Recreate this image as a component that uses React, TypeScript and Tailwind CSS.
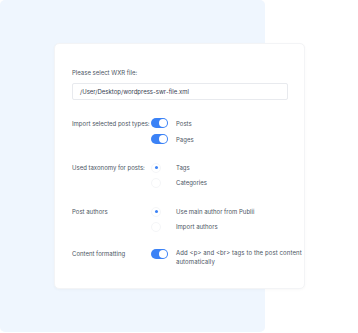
import type { ReactNode } from 'react';

// Small blue switch used for post types and formatting
function Toggle() {
  return (
    <div className="w-[17px] h-[10px] rounded-full bg-[#3b82f6] flex items-center justify-end pr-[1px] shrink-0">
      <div className="w-[8px] h-[8px] rounded-full bg-white" />
    </div>
  );
}

function Radio({ checked }: { checked?: boolean }) {
  return (
    <div className="w-[10px] h-[10px] rounded-full border border-[#f5f6f8] flex items-center justify-center shrink-0">
      {checked && <div className="w-[3px] h-[3px] rounded-full bg-[#3b82f6]" />}
    </div>
  );
}

function Row({ label, control, children, h }: { label?: string; control: ReactNode; children: ReactNode; h: string }) {
  return (
    <div className={`flex items-center ${h}`}>
      <div className="w-[79px] shrink-0">{label}</div>
      <div className="w-[25px] shrink-0 flex">{control}</div>
      <div className="whitespace-nowrap">{children}</div>
    </div>
  );
}

export default function App() {
  return (
    <div className="relative w-[358px] h-[333px] bg-white overflow-hidden" style={{ fontFamily: 'Inter, "Liberation Sans", sans-serif' }}>
      <div className="w-[265px] h-[332px] bg-[#eff6fe] rounded-[5px]" />

      <div className="absolute left-[54px] top-[43px] w-[251px] h-[246px] bg-white rounded-[5px] border border-[#f3f4f6] shadow-[0_1px_3px_rgba(0,0,0,0.03)] overflow-hidden pl-[17px] text-[6px] leading-[9px] text-[#4b5563]">
        <div className="mt-[25px] h-[8px] leading-[8px]">Please select WXR file:</div>
        <div className="mt-[6px] w-[216px] h-[17px] border border-[#e8eaee] rounded-[2px] flex items-center pl-[7px] text-[#374151]">
          /User/Desktop/wordpress-swr-file.xml
        </div>

        {/* Post types */}
        <div className="mt-[15px]">
          <Row h="h-[16px]" label="Import selected post types:" control={<Toggle />}>Posts</Row>
          <Row h="h-[16px]" control={<Toggle />}>Pages</Row>
        </div>

        {/* Taxonomy */}
        <div className="mt-[13px]">
          <Row h="h-[15px]" label="Used taxonomy for posts:" control={<Radio checked />}>Tags</Row>
          <Row h="h-[15px]" control={<Radio />}>Categories</Row>
        </div>

        {/* Authors */}
        <div className="mt-[14px]">
          <Row h="h-[15px]" label="Post authors" control={<Radio checked />}>Use main author from Publii</Row>
          <Row h="h-[15px]" control={<Radio />}>Import authors</Row>
        </div>

        {/* Formatting */}
        <div className="mt-[14px] flex items-start">
          <div className="w-[79px] shrink-0 mt-[0.5px]">Content formatting</div>
          <div className="w-[25px] shrink-0 mt-[0.5px]">
            <Toggle />
          </div>
          <div className="whitespace-nowrap tracking-[0.1px]">
            Add &lt;p&gt; and &lt;br&gt; tags to the post content
            <br />
            automatically
          </div>
        </div>
      </div>
    </div>
  );
}
